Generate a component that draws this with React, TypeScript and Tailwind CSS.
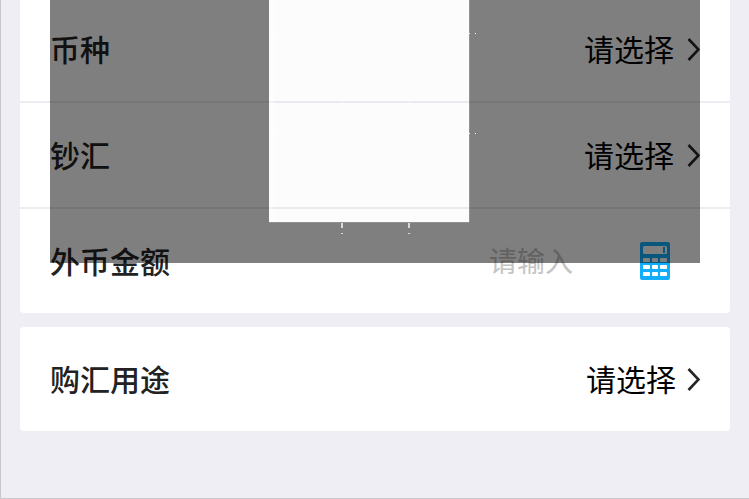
import React, { useState } from "react";

type PickerRowProps = {
  id: string;
  label: string;
  className?: string;
  buttonClassName?: string;
};

function Chevron() {
  return (
    <svg width="14" height="24" viewBox="0 0 14 24" fill="none" className="shrink-0">
      <path d="M2.5 2L12.5 12.5L2.5 23" stroke="#262626" strokeWidth="2.6" />
    </svg>
  );
}

function CalculatorIcon() {
  const cols = [3, 12, 20];
  const rows = [16, 23, 30];

  return (
    <svg width="30" height="38" viewBox="0 0 30 38" className="block">
      <rect width="30" height="38" rx="2" fill="#13aefa" />
      <rect x="3" y="4" width="24" height="8" rx="1.5" fill="#fff" />
      <rect x="23" y="5" width="2" height="6" fill="#13aefa" />
      {rows.map((y) =>
        cols.map((x) => (
          <rect key={`${x}-${y}`} x={x} y={y} width={x === 12 ? 6 : 7} height="4" rx="0.8" fill="#fff" />
        ))
      )}
    </svg>
  );
}

function PickerRow({ id, label, className = "", buttonClassName = "gap-3" }: PickerRowProps) {
  return (
    <div className={"flex items-center justify-between bg-white px-[30px] " + className}>
      <span id={id} className="pb-[3px] font-medium text-[#222222]">
        {label}
      </span>
      <button type="button" aria-describedby={id} className={"flex items-center text-black " + buttonClassName}>
        <span className="pb-[3px]">请选择</span>
        <Chevron />
      </button>
    </div>
  );
}

// Dimmed layer with a clear window and dashed guides
function Mask() {
  return (
    <div className="pointer-events-none absolute top-0 right-[49px] left-[49px] flex h-[263px]" aria-hidden="true">
      <div className="w-[219px] bg-black/50" />
      <div className="flex w-[200px] flex-col">
        <div className="h-[222px] border-l-[6px] border-white/30 bg-black/1" />
        <div className="flex-1 border-t border-white/15 bg-black/50" />
      </div>
      <div className="flex-1 bg-black/50">
        <div className="h-[222px] border-l border-white/15" />
      </div>
      <svg className="absolute top-0 left-[219px]" width="207" height="234" fill="none" stroke="#fff">
        <path d="M6 33.5H200M6 133.5H200" strokeDasharray="5 5" strokeOpacity="0.7" />
        <path d="M73.5 0V220M140.5 0V220" strokeDasharray="5 5" strokeOpacity="0.7" />
        <path d="M199 33.5h2M206 33.5h1M199 133.5h2M206 133.5h1" />
        <path d="M73 223v5M73 233v1M140 223v5M140 233v1" strokeWidth="2" strokeOpacity="0.7" />
      </svg>
    </div>
  );
}

export default function App() {
  const [amount, setAmount] = useState("");

  return (
    <main className="relative min-h-screen border-b border-l border-[#c8c8cd] bg-[#efeef5] px-[19px] font-['Noto_Sans_CJK_SC',sans-serif] text-[30px] leading-9">
      {/* Currency and amount */}
      <section className="overflow-hidden rounded-b-sm">
        <PickerRow id="currency" label="币种" className="h-[101px] pb-[3px]" />
        <PickerRow id="cash-type" label="钞汇" className="h-[106px] border-t-2 border-[#ececf2]" />
        <div className="flex h-[106px] items-center border-t-2 border-[#ececf2] bg-white px-[30px]">
          <label htmlFor="amount" className="pb-[3px] font-medium text-[#222222]">
            外币金额
          </label>
          <input
            id="amount"
            inputMode="decimal"
            placeholder="请输入"
            value={amount}
            onChange={(e) => setAmount(e.target.value)}
            className="ml-auto w-[84px] bg-transparent pb-[3px] text-[28px] text-black outline-none placeholder:text-[#c4c4c4]"
          />
          <button type="button" aria-label="计算器" className="mr-[30px] ml-[67px]">
            <CalculatorIcon />
          </button>
        </div>
      </section>

      {/* Purpose */}
      <section className="mt-3.5 overflow-hidden rounded-sm">
        <PickerRow id="purpose" label="购汇用途" className="h-[104px]" buttonClassName="gap-2.5" />
      </section>

      <Mask />
    </main>
  );
}
